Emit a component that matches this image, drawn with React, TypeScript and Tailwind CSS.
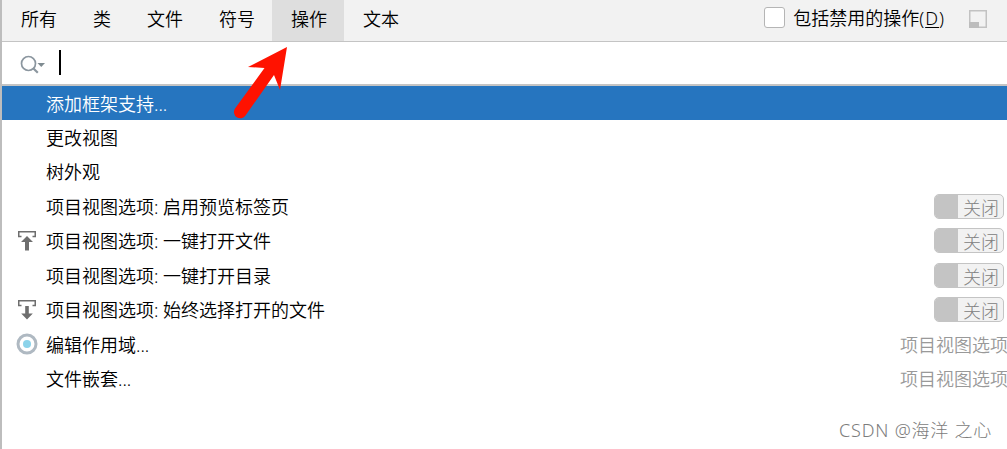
import React, { useState } from "react";

type Action = {
  label: string;
  icon?: React.ReactNode;
  toggle?: boolean;
  group?: string;
};

const ScrollFromIcon = () => (
  <svg width="18" height="20" viewBox="0 0 18 20" fill="none">
    <path d="M3.5 5.5H.75V.75h16.5V5.5H14.5" stroke="#6e6e6e" strokeWidth="1.5" />
    <path d="M9 5l6 6h-4v8.5H7V11H3z" fill="#6e6e6e" />
  </svg>
);

const ScrollToIcon = () => (
  <svg width="18" height="20" viewBox="0 0 18 20" fill="none">
    <path d="M3.5 5.5H.75V.75h16.5V5.5H14.5" stroke="#6e6e6e" strokeWidth="1.5" />
    <path d="M7.2 6h3.6v7.5h4L9 19.5l-5.8-6h4z" fill="#6e6e6e" />
  </svg>
);

const ScopeIcon = () => (
  <svg width="22" height="22" viewBox="0 0 22 22" fill="none">
    <circle cx="11" cy="11" r="9" stroke="#afb9c2" strokeWidth="3" />
    <circle cx="11" cy="11" r="4" fill="#8bd3ea" />
  </svg>
);

const tabs = ["所有", "类", "文件", "符号", "操作", "文本"];

const actions: Action[] = [
  { label: "添加框架支持..." },
  { label: "更改视图" },
  { label: "树外观" },
  { label: "项目视图选项: 启用预览标签页", toggle: true },
  { label: "项目视图选项: 一键打开文件", icon: <ScrollFromIcon />, toggle: true },
  { label: "项目视图选项: 一键打开目录", toggle: true },
  { label: "项目视图选项: 始终选择打开的文件", icon: <ScrollToIcon />, toggle: true },
  { label: "编辑作用域...", icon: <ScopeIcon />, group: "项目视图选项" },
  { label: "文件嵌套...", group: "项目视图选项" },
];

const Toggle = () => (
  <span className="mr-[3px] flex h-[25px] w-[70px] shrink-0 overflow-hidden rounded-[5px] border border-[#c4c4c4] bg-[#f2f2f2]">
    <span className="w-[23px] shrink-0 bg-[#c4c4c4]" />
    <span className="pl-[5px] text-[18px] leading-[26px] font-light text-[#808080]">关闭</span>
  </span>
);

const App = () => {
  const [activeTab, setActiveTab] = useState("操作");
  const [selected, setSelected] = useState(0);

  return (
    <div className="relative h-[449px] w-[1007px] overflow-hidden border-l-2 border-[#bdbdbd] bg-white font-['Noto_Sans','Noto_Sans_CJK_SC',sans-serif] text-[18px] font-[350] whitespace-nowrap text-black">
      {/* Tabs */}
      <div className="flex h-[42px] justify-between border-b border-[#c4c4c4] bg-[#f2f2f2]">
        <div className="flex">
          {tabs.map((tab) => (
            <button
              key={tab}
              onClick={() => setActiveTab(tab)}
              className={`pr-[17px] pb-[3px] pl-[19px] leading-[36px] ${
                tab === activeTab ? "bg-[#dedede]" : ""
              }`}
            >
              {tab}
            </button>
          ))}
        </div>
        <div className="flex items-start pr-5">
          <span className="mt-[7px] mr-2 size-[21px] rounded-[3px] border-[1.5px] border-[#b5b5b5] bg-white" />
          <span className="mr-6 leading-[37px]">
            包括禁用的操作
            <span className="tracking-[1px]">
              (<span className="underline decoration-1 underline-offset-2">D</span>)
            </span>
          </span>
          <svg className="mt-[10px]" width="18" height="18" viewBox="0 0 18 18" fill="none">
            <rect x=".75" y=".75" width="16.5" height="16.5" stroke="#c2c2c2" strokeWidth="1.5" />
            <path d="M0 12h10v6H0z" fill="#bdbdbd" />
          </svg>
        </div>
      </div>

      {/* Search field */}
      <div className="flex h-11 border-b-2 border-[#c4c4c4] pl-[18px]">
        <svg className="mt-[13px]" width="26" height="20" viewBox="0 0 26 20" fill="none">
          <circle cx="8.5" cy="8.5" r="7" stroke="#8b969f" strokeWidth="1.7" />
          <path d="M13.2 13.2l4.6 4.6" stroke="#8b969f" strokeWidth="2.2" />
          <path d="M17.5 8h7.5l-3.75 4z" fill="#7f8b91" />
        </svg>
        <span className="mt-2 ml-[13px] h-[25px] w-[2px] bg-black" />
      </div>

      {/* Results */}
      <ul>
        {actions.map((action, i) => (
          <li
            key={action.label}
            onClick={() => setSelected(i)}
            className={`flex h-[34.5px] items-center first:h-[34px] ${
              i === selected ? "bg-[#2675bf] text-white" : ""
            }`}
          >
            <span className="flex w-[44px] shrink-0 justify-center">
              <span className="mr-[-6px]">{action.icon}</span>
            </span>
            <span className="flex-1 pt-[2px]">{action.label}</span>
            {action.toggle && <Toggle />}
            {action.group && (
              <span className="w-[107px] shrink-0 pt-[2px] text-[#999999]">{action.group}</span>
            )}
          </li>
        ))}
      </ul>

      {/* Pointer to the active tab */}
      <svg
        className="absolute top-[44px] left-[230px]"
        width="60"
        height="76"
        viewBox="0 0 60 76"
      >
        <path
          d="M55 3L48 46l-6-15L13.5 71.5a6 6 0 0 1-10.5-7L32.5 24 16 23z"
          fill="#ff1200"
        />
      </svg>

      <span className="absolute top-[418px] left-[837px] text-[18px] leading-[25px] font-light tracking-[0.8px] text-[#7c7c7c]">
        CSDN @海洋 之心
      </span>
    </div>
  );
};

export default App;
